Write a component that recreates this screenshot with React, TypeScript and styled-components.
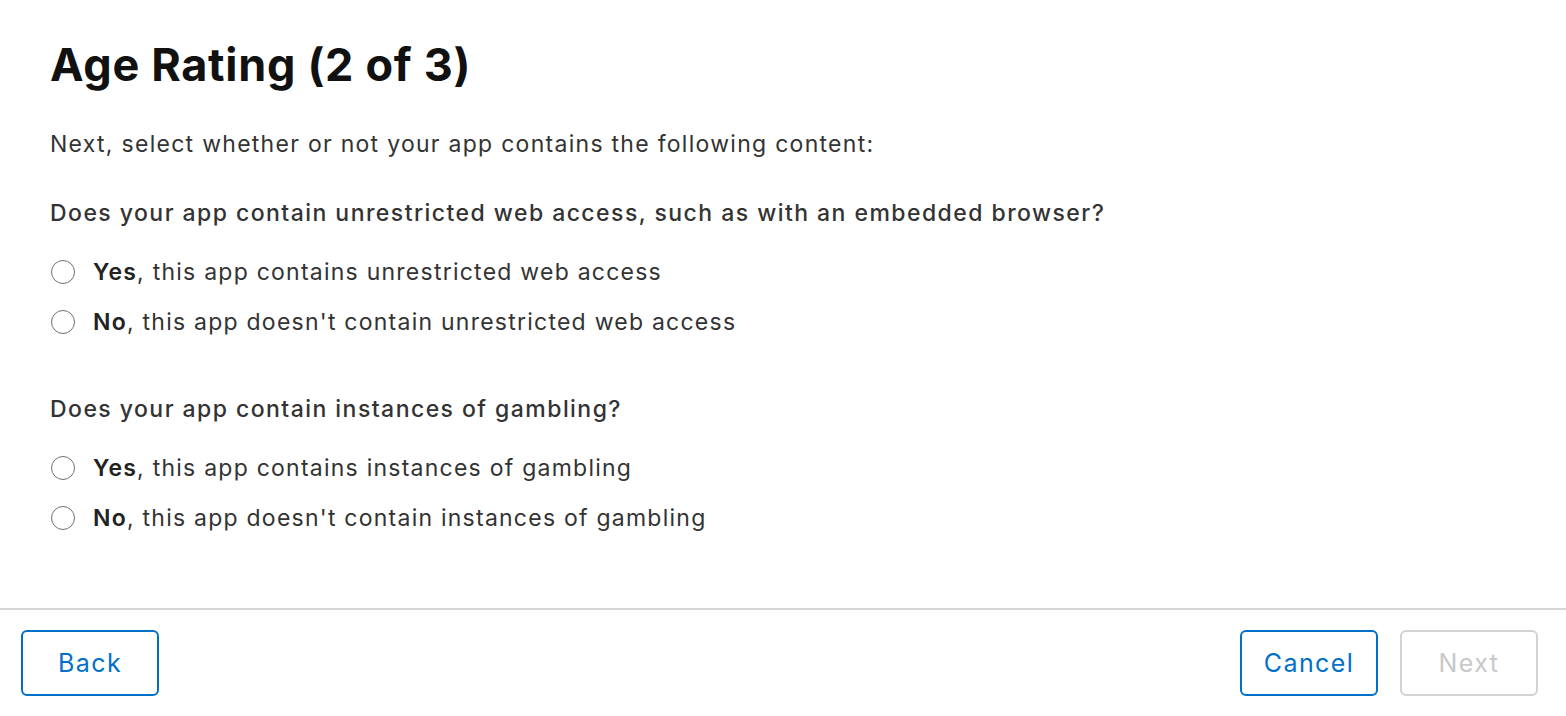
import React from "react";
import styled, { createGlobalStyle } from "styled-components";

const Global = createGlobalStyle`
  html, body { margin: 0; padding: 0; background: #fff; }
  body { font-family: Inter, "Noto Sans", sans-serif; -webkit-font-smoothing: antialiased; }
`;

const Page = styled.div`
  width: 1566px;
  height: 716px;
  display: flex;
  flex-direction: column;
  background: #fff;
`;

const Content = styled.div`
  flex: 1;
  padding: 38px 50px 0 50px;
  display: flex;
  flex-direction: column;
`;

const Title = styled.h1`
  margin: 0;
  font-size: 45px;
  line-height: 54px;
  font-weight: 700;
  color: #111;
  letter-spacing: 0.7px;
`;

const Intro = styled.p`
  margin: 38px 0 0 0;
  font-size: 23px;
  line-height: 28px;
  color: #333;
  letter-spacing: 1.28px;
`;

const Question = styled.fieldset<{ $first?: boolean }>`
  border: 0;
  margin: ${(p) => (p.$first ? "41px" : "48px")} 0 0 0;
  padding: 0;
  display: flex;
  flex-direction: column;
`;

const Legend = styled.div`
  font-size: 23px;
  line-height: 28px;
  font-weight: 500;
  color: #333;
  letter-spacing: 1.45px;
  margin-bottom: 20px;
`;

const Option = styled.label`
  display: flex;
  align-items: center;
  height: 50px;
  font-size: 23px;
  letter-spacing: 1.24px;
  color: #333;
  cursor: pointer;
`;

const Radio = styled.span`
  width: 24px;
  height: 24px;
  border-radius: 50%;
  border: 1.5px solid #707070;
  margin-left: 1px;
  margin-right: 18px;
  flex-shrink: 0;
  box-sizing: border-box;
`;

const Strong = styled.b`
  font-weight: 600;
  color: #222;
`;

const Footer = styled.div`
  border-top: 2px solid #d6d6d6;
  height: 108px;
  box-sizing: border-box;
  display: flex;
  align-items: center;
  justify-content: space-between;
  padding: 0 28px 0 21px;
`;

const Group = styled.div`
  display: flex;
  gap: 22px;
`;

const Button = styled.button<{ $disabled?: boolean }>`
  width: 138px;
  height: 66px;
  border-radius: 6px;
  background: #fff;
  border: 2px solid ${(p) => (p.$disabled ? "#d2d2d2" : "#0070c9")};
  color: ${(p) => (p.$disabled ? "#c8c8c8" : "#0070c9")};
  font-family: Inter, "Noto Sans", sans-serif;
  font-size: 25px;
  font-weight: 400;
  letter-spacing: 1.4px;
  padding: 0;
  cursor: ${(p) => (p.$disabled ? "default" : "pointer")};
`;

const questions = [
  {
    q: "Does your app contain unrestricted web access, such as with an embedded browser?",
    yes: "this app contains unrestricted web access",
    no: "this app doesn't contain unrestricted web access",
  },
  {
    q: "Does your app contain instances of gambling?",
    yes: "this app contains instances of gambling",
    no: "this app doesn't contain instances of gambling",
  },
];

export default function App() {
  return (
    <Page>
      <Global />
      <Content>
        <Title>Age Rating (2 of 3)</Title>
        <Intro>Next, select whether or not your app contains the following content:</Intro>
        {questions.map((item, i) => (
          <Question key={i} $first={i === 0}>
            <Legend>{item.q}</Legend>
            <Option>
              <Radio />
              <span>
                <Strong>Yes</Strong>, {item.yes}
              </span>
            </Option>
            <Option>
              <Radio />
              <span>
                <Strong>No</Strong>, {item.no}
              </span>
            </Option>
          </Question>
        ))}
      </Content>
      <Footer>
        <Button>Back</Button>
        <Group>
          <Button>Cancel</Button>
          <Button $disabled disabled>
            Next
          </Button>
        </Group>
      </Footer>
    </Page>
  );
}
